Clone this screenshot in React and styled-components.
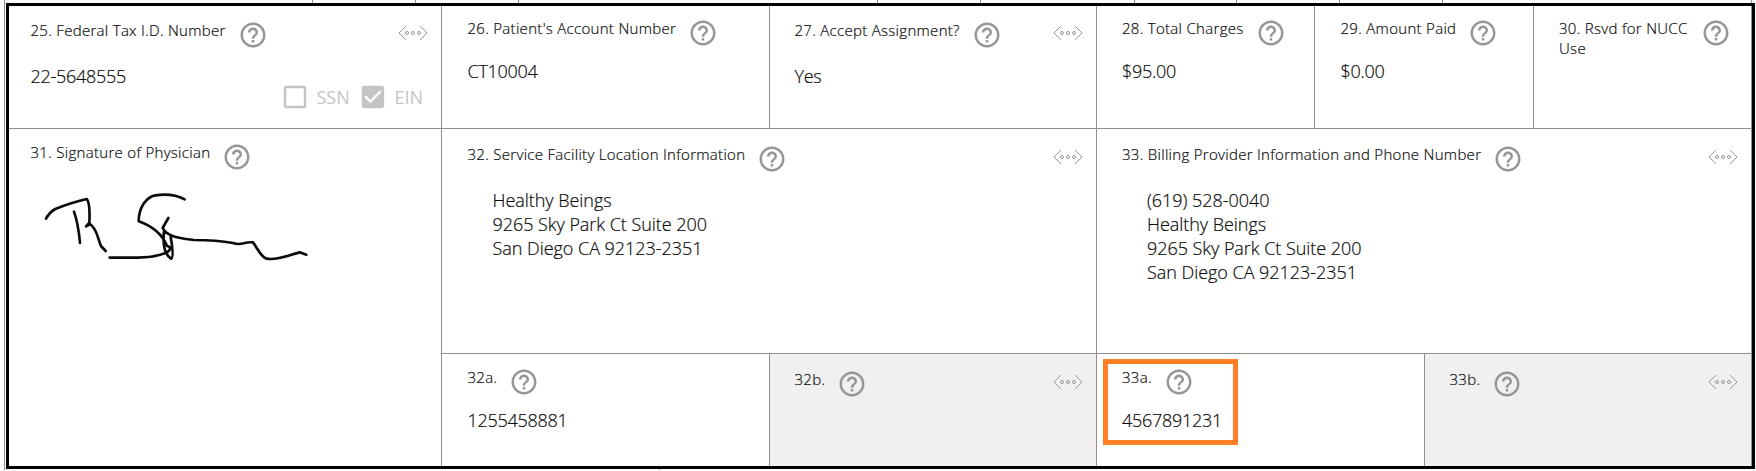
import React from "react";
import styled, { createGlobalStyle, css } from "styled-components";

const line = "#8f8f8f";

const Global = createGlobalStyle`
  *, *::before { box-sizing: border-box; }
  body {
    margin: 0;
    background: #fff;
    color: #0c0c0c;
    font-family: "Open Sans", "Noto Sans", sans-serif;
    font-weight: 300;
    overflow: hidden;
  }
`;

const Page = styled.main`
  width: 1748px;
  height: 470px;
  margin-left: 4px;
  border-left: 1px solid ${line};
`;

const Ticks = styled.div`
  display: grid;
  grid-template-columns: ${(p) => p.$columns};
  height: ${(p) => p.$height}px;
`;

const Tick = styled.div`
  border-right: 1px solid ${line};
`;

const Form = styled.section`
  display: grid;
  grid-template-columns: 433px 328px 327px 218px 219px 218px;
  grid-template-rows: 123px 225px 112px;
  width: 1749px;
  margin-left: 1px;
  border: 3px solid #000;
`;

const Cell = styled.div`
  display: flex;
  flex-direction: column;
  min-width: 0;
  grid-column: span ${(p) => p.$cols || 1};
  grid-row: span ${(p) => p.$rows || 1};
  padding: ${(p) => p.$top}px 12px 0 ${(p) => p.$left || 25}px;
  border-right: 1px solid ${line};
  border-bottom: ${(p) => (p.$last ? "none" : `1px solid ${line}`)};
  background: ${(p) => (p.$muted ? "#f0f0f0" : "#fff")};
`;

const HalfCells = styled.div`
  display: grid;
  grid-column: span ${(p) => p.$cols};
  grid-template-columns: ${(p) => p.$columns};
`;

const Header = styled.header`
  display: flex;
  align-items: flex-start;
  height: 30px;
  flex: none;
`;

const Label = styled.h2`
  margin: 0;
  font-size: 15px;
  font-weight: inherit;
  line-height: 20px;
  letter-spacing: 0.3px;
  -webkit-text-stroke: 0.2px currentColor;
  ${(p) =>
    p.$wrap
      ? css`
          width: 141.5px;
        `
      : css`
          white-space: nowrap;
        `}
`;

const HelpSvg = styled.svg`
  flex: none;
  width: 30px;
  height: 30px;
  margin-left: ${(p) => p.$gap}px;
  fill: #969696;
`;

const MoreSvg = styled.svg`
  flex: none;
  width: 30px;
  height: 16px;
  margin: 5px 1px 0 auto;
  fill: none;
  stroke: #999;
`;

const Value = styled.div`
  margin-top: ${(p) => p.$gap ?? 11}px;
  font-size: 18px;
  line-height: 24px;
  letter-spacing: -0.27px;
  -webkit-text-stroke: 0.2px currentColor;
  white-space: nowrap;
`;

const Address = styled.address`
  margin: 14px 0 0 25px;
  font-size: 18px;
  font-style: normal;
  line-height: 24px;
  letter-spacing: -0.04px;
  -webkit-text-stroke: 0.2px currentColor;
`;

const Options = styled.div`
  display: flex;
  align-items: center;
  align-self: flex-end;
  height: 30px;
  margin: -6px 6px 0 0;
  color: #c4c4c4;
`;

const Option = styled.label`
  display: flex;
  align-items: center;
  width: ${(p) => p.$width}px;
  font-size: 18px;
  font-weight: 400;
  line-height: 24px;
`;

const Box = styled.svg`
  width: 30px;
  height: 30px;
  margin-right: 6.5px;
  fill: currentColor;
`;

const Signature = styled.svg`
  width: 267px;
  height: 72px;
  margin: 19px 0 0 13px;
  fill: none;
  stroke: #0b0b0b;
  stroke-width: 8;
  stroke-linecap: round;
  stroke-linejoin: round;
`;

const Highlighted = styled.div`
  position: relative;
  &::before {
    content: "";
    position: absolute;
    left: -19px;
    top: -8px;
    width: 135px;
    height: 86px;
    border: 5px solid #ff7f27;
  }
`;

const Help = ({ gap = 12 }) => (
  <HelpSvg viewBox="0 0 24 24" $gap={gap}>
    <path d="M11 18h2v-2h-2v2zm1-16C6.48 2 2 6.48 2 12s4.48 10 10 10 10-4.48 10-10S17.52 2 12 2zm0 18c-4.41 0-8-3.59-8-8s3.59-8 8-8 8 3.59 8 8-3.59 8-8 8zm0-14c-2.21 0-4 1.79-4 4h2c0-1.1.9-2 2-2s2 .9 2 2c0 2-3 1.75-3 5h2c0-2.25 3-2.5 3-5 0-2.21-1.79-4-4-4z" />
  </HelpSvg>
);

const More = () => (
  <MoreSvg viewBox="0 0 30 16">
    <path d="M8 1 1 8l7 7M22 1l7 7-7 7" />
    <circle cx="9" cy="8" r="1.5" />
    <circle cx="15" cy="8" r="1.5" />
    <circle cx="21" cy="8" r="1.5" />
  </MoreSvg>
);

const Head = ({ children, wrap, gap, more }) => (
  <Header>
    <Label $wrap={wrap}>{children}</Label>
    <Help gap={gap} />
    {more && <More />}
  </Header>
);

export default function App() {
  return (
    <>
      <Global />
      <Page>
        <Ticks $height={3} $columns="308px 103px 103px 359px 103px 154px 102px 103px 103px 309px">
          {Array.from({ length: 10 }, (_, i) => <Tick key={i} />)}
        </Ticks>
        <Form>
          <Cell $top={14} $left={21.5}>
            <Head more>25. Federal Tax I.D. Number</Head>
            <Value $gap={14}>22-5648555</Value>
            <Options>
              <Option $width={78}>
                <Box viewBox="0 0 24 24">
                  <path d="M19 5v14H5V5h14m0-2H5c-1.100 0-2 .9-2 2v14c0 1.100.9 2 2 2h14c1.100 0 2-.9 2-2V5c0-1.100-.9-2-2-2z" />
                </Box>
                SSN
              </Option>
              <Option $width={65}>
                <Box viewBox="0 0 24 24">
                  <path d="M19 3H5c-1.110 0-2 .9-2 2v14c0 1.100.89 2 2 2h14c1.110 0 2-.9 2-2V5c0-1.100-.89-2-2-2zm-9 14l-5-5 1.410-1.410L10 14.170l7.590-7.590L19 8l-9 9z" />
                </Box>
                EIN
              </Option>
            </Options>
          </Cell>
          <Cell $top={12} $left={25.5}>
            <Head>26. Patient's Account Number</Head>
            <Value>CT10004</Value>
          </Cell>
          <Cell $top={14} $left={24.5}>
            <Head more>27. Accept Assignment?</Head>
            <Value $gap={14}>Yes</Value>
          </Cell>
          <Cell $top={12}>
            <Head>28. Total Charges</Head>
            <Value>$95.00</Value>
          </Cell>
          <Cell $top={12} $left={25.5}>
            <Head>29. Amount Paid</Head>
            <Value>$0.00</Value>
          </Cell>
          <Cell $top={12}>
            <Head wrap gap={0}>30. Rsvd for NUCC Use</Head>
          </Cell>

          <Cell $top={13} $left={21.5} $rows={2} $last>
            <Head>31. Signature of Physician</Head>
            <Signature viewBox="130 180 801 216">
              <path d="M136 263Q147 243 164 234Q204 217 258 204Q269 215 266 275L256 286L268 279C290 294 291 323 301 345L315 360M220 242Q233 279 238 336M327 380H410Q462 379 492 367C510 361 514 347 499 345C483 306 454 285 414 271C414 229 438 197 464 193Q516 186 552 205M503 261L486 291Q495 310 525 318Q549 324 580 327C630 327 670 331 697 336C725 346 728 331 757 334C772 354 779 377 798 383C832 389 867 371 897 364L917 371M490 301C487 328 486 366 511 383Q521 381 510 318" />
            </Signature>
          </Cell>
          <Cell $top={15} $left={25.5} $cols={2}>
            <Head more>32. Service Facility Location Information</Head>
            <Address>
              Healthy Beings<br />
              9265 Sky Park Ct Suite 200<br />
              San Diego CA 92123-2351
            </Address>
          </Cell>
          <Cell $top={15} $cols={3}>
            <Head more>33. Billing Provider Information and Phone Number</Head>
            <Address>
              (619) 528-0040<br />
              Healthy Beings<br />
              9265 Sky Park Ct Suite 200<br />
              San Diego CA 92123-2351
            </Address>
          </Cell>

          <Cell $top={13} $left={25.5} $last>
            <Head>32a.</Head>
            <Value>1255458881</Value>
          </Cell>
          <Cell $top={15} $left={24.5} $muted $last>
            <Head more>32b.</Head>
          </Cell>
          <HalfCells $cols={3} $columns="328px 327px">
            <Cell $top={13} $last>
              <Highlighted>
                <Head>33a.</Head>
                <Value>4567891231</Value>
              </Highlighted>
            </Cell>
            <Cell $top={15} $left={24.5} $muted $last>
              <Head more>33b.</Head>
            </Cell>
          </HalfCells>
        </Form>
        <Ticks $height={1} $columns="655px">
          <Tick />
        </Ticks>
      </Page>
    </>
  );
}
